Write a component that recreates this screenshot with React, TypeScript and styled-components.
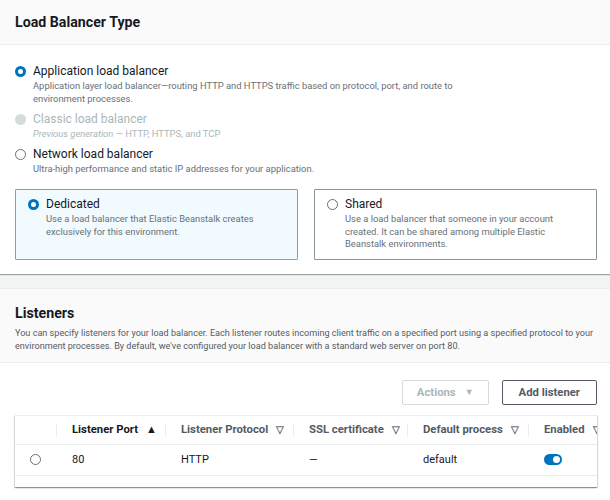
import styled, { createGlobalStyle } from "styled-components"

// ── Global ────────────────────────────────────────────────────────────────────

const GlobalStyle = createGlobalStyle`
    html, body {
        margin: 0;
        padding: 0;
        background: #f2f3f3;
        font-family: Roboto, "Liberation Sans", sans-serif;
        color: #16191f;
    }
`

// ── Layout ────────────────────────────────────────────────────────────────────

const Page = styled.div`
    display: flex;
    flex-direction: column;
    gap: 15px;
    width: 610px;
`

const Panel = styled.section`
    background: #ffffff;
    box-shadow: 0 1px 1px 0 rgba(0, 28, 36, 0.35), 0 0 1px 0 rgba(0, 28, 36, 0.15);
`

const PanelHeader = styled.header<{ $tall?: boolean }>`
    background: #fafafa;
    border-bottom: 1px solid #eaeded;
    padding: ${({ $tall }) => ($tall ? "15px 15px 9px" : "13px 15px 13px")};
`

const PanelTitle = styled.h2`
    margin: 0;
    font-size: 14.2px;
    line-height: 18px;
    font-weight: 700;
    color: #16191f;
`

const PanelDescription = styled.p`
    margin: 5px 0 0;
    font-size: 9.1px;
    line-height: 13px;
    color: #545b64;
`

const PanelBody = styled.div<{ $pad: string }>`
    padding: ${({ $pad }) => $pad};
`

// ── Radios ────────────────────────────────────────────────────────────────────

const OptionList = styled.div`
    display: flex;
    flex-direction: column;
    gap: 6.5px;
`

const Option = styled.label`
    display: grid;
    grid-template-columns: 11px 1fr;
    column-gap: 7px;
    align-items: start;
`

const RadioDot = styled.span<{ $state: "on" | "off" | "disabled" }>`
    width: 11px;
    height: 11px;
    margin-top: 2px;
    box-sizing: border-box;
    border-radius: 50%;
    background: ${({ $state }) => ($state === "disabled" ? "#d5dbdb" : "#ffffff")};
    border: ${({ $state }) =>
        $state === "on" ? "3px solid #0073bb" : $state === "off" ? "1px solid #687078" : "none"};
`

const OptionText = styled.div`
    display: flex;
    flex-direction: column;
`

const OptionLabel = styled.span<{ $disabled?: boolean }>`
    font-size: 12px;
    line-height: 15px;
    color: ${({ $disabled }) => ($disabled ? "#aab7b8" : "#16191f")};
`

const OptionDesc = styled.span<{ $disabled?: boolean; $max?: number }>`
    font-size: 9.4px;
    line-height: 12.5px;
    color: ${({ $disabled }) => ($disabled ? "#aab7b8" : "#687078")};
    max-width: ${({ $max }) => ($max ? `${$max}px` : "none")};
    margin-top: 1px;

    em {
        font-style: italic;
    }
`

const TileGrid = styled.div`
    display: grid;
    grid-template-columns: 1fr 1fr;
    gap: 16px;
    margin-top: 14px;
`

const Tile = styled.div<{ $selected?: boolean }>`
    border: 1px solid ${({ $selected }) => ($selected ? "#44b9d6" : "#879596")};
    background: ${({ $selected }) => ($selected ? "#f1faff" : "#ffffff")};
    border-radius: 1px;
    padding: 7px 12px 8px;
`

// ── Table ─────────────────────────────────────────────────────────────────────

const Toolbar = styled.div`
    display: flex;
    justify-content: flex-end;
    gap: 13px;
    margin-bottom: 10px;
`

const Button = styled.button<{ $disabled?: boolean }>`
    height: 25px;
    box-sizing: border-box;
    padding: 0 ${({ $disabled }) => ($disabled ? "14px" : "16px")};
    background: #ffffff;
    border-radius: 2px;
    border: 1px solid ${({ $disabled }) => ($disabled ? "#d5dbdb" : "#545b64")};
    color: ${({ $disabled }) => ($disabled ? "#aab7b8" : "#545b64")};
    font-family: inherit;
    font-size: 11.3px;
    font-weight: 700;
    display: flex;
    align-items: center;
    gap: 9px;
`

const Caret = styled.span`
    font-size: 9px;
`

const TableWrap = styled.div`
    background: #ffffff;
    overflow: hidden;
    box-shadow: 0 1px 1px 0 rgba(0, 28, 36, 0.3), 1px 1px 1px 0 rgba(0, 28, 36, 0.12),
        -1px 1px 1px 0 rgba(0, 28, 36, 0.12);
    border-top: 1px solid #eaeded;
    padding-bottom: 11px;
`

const Table = styled.table`
    border-collapse: collapse;
    table-layout: fixed;
    width: 640px;
`

const Col = styled.col<{ $w: number }>`
    width: ${({ $w }) => $w}px;
`

const HeadCell = styled.th<{ $sorted?: boolean }>`
    height: 28px;
    padding: 0 0 0 16px;
    text-align: left;
    font-size: 11.3px;
    font-weight: 700;
    white-space: nowrap;
    color: ${({ $sorted }) => ($sorted ? "#16191f" : "#545b64")};
    border-bottom: 1px solid #eaeded;
    position: relative;

    &:not(:first-child)::before {
        content: "";
        position: absolute;
        left: 0;
        top: 8px;
        bottom: 8px;
        width: 1px;
        background: #eaeded;
    }
`

const SortIcon = styled.span<{ $sorted?: boolean }>`
    margin-left: 8px;
    font-size: ${({ $sorted }) => ($sorted ? "11px" : "10px")};
    color: ${({ $sorted }) => ($sorted ? "#16191f" : "#687078")};
`

const Cell = styled.td`
    height: 30px;
    padding: 0 0 0 16px;
    font-size: 11px;
    color: #16191f;
    border-bottom: 1px solid #eaeded;
    white-space: nowrap;
`

const SelectCell = styled(Cell)`
    padding-left: 15px;
`

const RowRadio = styled.span`
    display: block;
    width: 11px;
    height: 11px;
    box-sizing: border-box;
    border-radius: 50%;
    border: 1px solid #687078;
`

const Toggle = styled.span`
    display: block;
    width: 18px;
    height: 11px;
    border-radius: 6px;
    background: #0073bb;
    position: relative;

    &::after {
        content: "";
        position: absolute;
        right: 2px;
        top: 2px;
        width: 7px;
        height: 7px;
        border-radius: 50%;
        background: #ffffff;
    }
`

// ── Data ──────────────────────────────────────────────────────────────────────

const columns = [
    { label: "", w: 41 },
    { label: "Listener Port", w: 109, sorted: true },
    { label: "Listener Protocol", w: 128 },
    { label: "SSL certificate", w: 114 },
    { label: "Default process", w: 121 },
    { label: "Enabled", w: 127 },
]

export default function App() {
    return (
        <>
            <GlobalStyle />
            <Page>
                <Panel>
                    <PanelHeader>
                        <PanelTitle>Load Balancer Type</PanelTitle>
                    </PanelHeader>
                    <PanelBody $pad="19px 13px 14px 15px">
                        <OptionList>
                            <Option>
                                <RadioDot $state="on" />
                                <OptionText>
                                    <OptionLabel>Application load balancer</OptionLabel>
                                    <OptionDesc $max={425}>
                                        Application layer load balancer—routing HTTP and HTTPS traffic based on
                                        protocol, port, and route to environment processes.
                                    </OptionDesc>
                                </OptionText>
                            </Option>
                            <Option>
                                <RadioDot $state="disabled" />
                                <OptionText>
                                    <OptionLabel $disabled>Classic load balancer</OptionLabel>
                                    <OptionDesc $disabled>
                                        <em>Previous generation</em> — HTTP, HTTPS, and TCP
                                    </OptionDesc>
                                </OptionText>
                            </Option>
                            <Option>
                                <RadioDot $state="off" />
                                <OptionText>
                                    <OptionLabel>Network load balancer</OptionLabel>
                                    <OptionDesc>
                                        Ultra-high performance and static IP addresses for your application.
                                    </OptionDesc>
                                </OptionText>
                            </Option>
                        </OptionList>
                        <TileGrid>
                            <Tile $selected>
                                <Option>
                                    <RadioDot $state="on" />
                                    <OptionText>
                                        <OptionLabel>Dedicated</OptionLabel>
                                        <OptionDesc $max={232}>
                                            Use a load balancer that Elastic Beanstalk creates exclusively for this
                                            environment.
                                        </OptionDesc>
                                    </OptionText>
                                </Option>
                            </Tile>
                            <Tile>
                                <Option>
                                    <RadioDot $state="off" />
                                    <OptionText>
                                        <OptionLabel>Shared</OptionLabel>
                                        <OptionDesc $max={232}>
                                            Use a load balancer that someone in your account created. It can be
                                            shared among multiple Elastic Beanstalk environments.
                                        </OptionDesc>
                                    </OptionText>
                                </Option>
                            </Tile>
                        </TileGrid>
                    </PanelBody>
                </Panel>

                <Panel>
                    <PanelHeader $tall>
                        <PanelTitle>Listeners</PanelTitle>
                        <PanelDescription>
                            You can specify listeners for your load balancer. Each listener routes incoming client
                            traffic on a specified port using a specified protocol to your environment processes. By
                            default, we've configured your load balancer with a standard web server on port 80.
                        </PanelDescription>
                    </PanelHeader>
                    <PanelBody $pad="17px 13px 14px 15px">
                        <Toolbar>
                            <Button $disabled>
                                Actions <Caret>▼</Caret>
                            </Button>
                            <Button>Add listener</Button>
                        </Toolbar>
                        <TableWrap>
                            <Table>
                                <colgroup>
                                    {columns.map((c) => (
                                        <Col key={c.label || "select"} $w={c.w} />
                                    ))}
                                </colgroup>
                                <thead>
                                    <tr>
                                        {columns.map((c) => (
                                            <HeadCell key={c.label || "select"} $sorted={c.sorted}>
                                                {c.label}
                                                {c.label && (
                                                    <SortIcon $sorted={c.sorted}>{c.sorted ? "▲" : "▽"}</SortIcon>
                                                )}
                                            </HeadCell>
                                        ))}
                                    </tr>
                                </thead>
                                <tbody>
                                    <tr>
                                        <SelectCell>
                                            <RowRadio />
                                        </SelectCell>
                                        <Cell>80</Cell>
                                        <Cell>HTTP</Cell>
                                        <Cell>—</Cell>
                                        <Cell>default</Cell>
                                        <Cell>
                                            <Toggle />
                                        </Cell>
                                    </tr>
                                </tbody>
                            </Table>
                        </TableWrap>
                    </PanelBody>
                </Panel>
            </Page>
        </>
    )
}
